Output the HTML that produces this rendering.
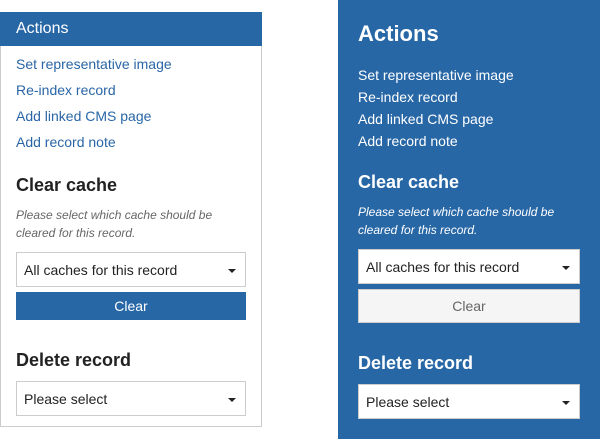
<!DOCTYPE html><html><head><style>
*{box-sizing:border-box;margin:0;padding:0}
body{width:600px;height:439px;background:#fff;font-family:"Liberation Sans",sans-serif;position:relative;overflow:hidden}
.a{position:absolute;white-space:nowrap}
.lk{font-size:14px;color:#2a66a6}
.h{font-size:18px;font-weight:bold;color:#222}
.it{font-size:12px;font-style:italic;color:#666;line-height:18px;white-space:normal}
.sel{position:absolute;background:#fff;border:1px solid #ccc;font-size:14px;color:#222;padding-left:7px;display:flex;align-items:center}
.sel:after{content:"";position:absolute;right:9px;top:50%;margin-top:-1px;border-left:4px solid transparent;border-right:4px solid transparent;border-top:4px solid #222}
</style></head><body>
<div class="a" style="left:0;top:12px;width:262px;height:415px;border:1px solid #ccc;border-top:none"></div>
<div class="a" style="left:0;top:12px;width:262px;height:34px;background:#2867a6;color:#fff;font-size:16px;padding:8px 16px">Actions</div>
<div class="a lk" style="left:16px;top:56px">Set representative image</div>
<div class="a lk" style="left:16px;top:82px">Re-index record</div>
<div class="a lk" style="left:16px;top:108px">Add linked CMS page</div>
<div class="a lk" style="left:16px;top:134px">Add record note</div>
<div class="a h" style="left:16px;top:175px">Clear cache</div>
<div class="a it" style="left:16px;top:206px;width:220px">Please select which cache should be cleared for this record.</div>
<div class="sel" style="left:16px;top:252px;width:230px;height:35px">All caches for this record</div>
<div class="a" style="left:16px;top:292px;width:230px;height:28px;background:#2867a6;color:#fff;font-size:14px;text-align:center;line-height:28px">Clear</div>
<div class="a h" style="left:16px;top:350px">Delete record</div>
<div class="sel" style="left:16px;top:381px;width:230px;height:35px">Please select</div>

<div class="a" style="left:338px;top:0;width:262px;height:439px;background:#2867a6"></div>
<div class="a" style="left:358px;top:21px;color:#fff;font-size:22px;font-weight:bold">Actions</div>
<div class="a lk" style="left:358px;top:67px;color:#fff">Set representative image</div>
<div class="a lk" style="left:358px;top:89px;color:#fff">Re-index record</div>
<div class="a lk" style="left:358px;top:111px;color:#fff">Add linked CMS page</div>
<div class="a lk" style="left:358px;top:133px;color:#fff">Add record note</div>
<div class="a h" style="left:358px;top:172px;color:#fff">Clear cache</div>
<div class="a it" style="left:358px;top:203px;width:222px;color:#fff">Please select which cache should be cleared for this record.</div>
<div class="sel" style="left:358px;top:249px;width:222px;height:35px">All caches for this record</div>
<div class="a" style="left:358px;top:289px;width:222px;height:34px;background:#f5f5f5;border:1px solid #ccc;color:#666;font-size:14px;text-align:center;line-height:32px">Clear</div>
<div class="a h" style="left:358px;top:353px;color:#fff">Delete record</div>
<div class="sel" style="left:358px;top:384px;width:222px;height:35px">Please select</div>
</body></html>
